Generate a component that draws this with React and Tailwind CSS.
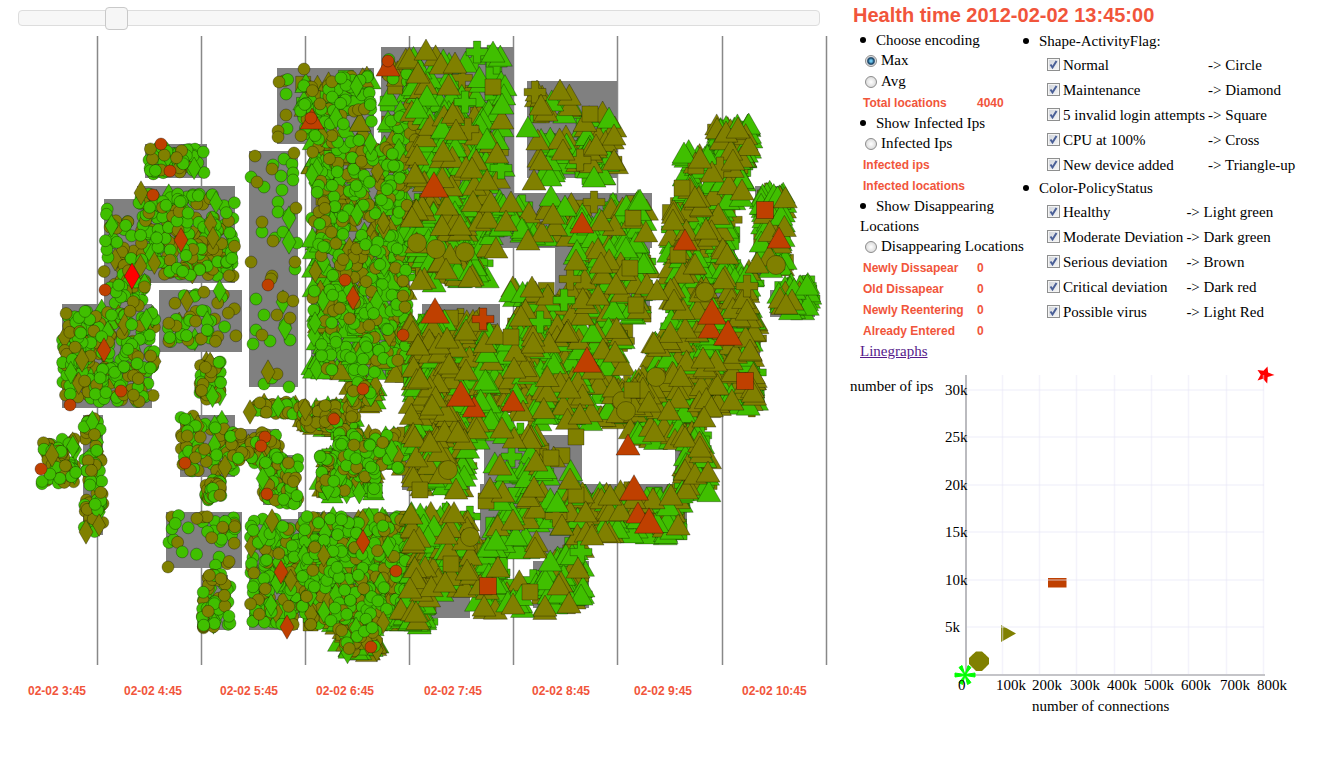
import React from "react";

const GREEN = "#40bf00";
const OLIVE = "#808000";
const RUST = "#bf4000";
const RED = "#ff0000";

function createRandom(seed) {
  let s = seed;
  return () => {
    s = (s + 0x6d2b79f5) | 0;
    let t = Math.imul(s ^ (s >>> 15), 1 | s);
    t = (t + Math.imul(t ^ (t >>> 7), 61 | t)) ^ t;
    return ((t ^ (t >>> 14)) >>> 0) / 4294967296;
  };
}

// Office blocks: [left, top, right, bottom]
const BLOCKS = [
  [145, 144, 207, 178], [277, 68, 374, 144], [381, 47, 514, 193], [527, 81, 617, 178],
  [137, 186, 235, 283], [104, 199, 137, 304], [249, 151, 298, 387], [311, 144, 409, 378],
  [400, 193, 652, 248], [666, 207, 735, 300], [62, 304, 152, 408], [159, 290, 242, 352],
  [83, 415, 103, 535], [180, 415, 235, 477], [235, 429, 279, 460], [263, 455, 298, 505],
  [166, 512, 242, 568], [201, 575, 228, 630], [249, 519, 298, 630], [298, 512, 470, 618],
  [555, 248, 650, 318], [422, 304, 500, 430], [690, 330, 760, 410], [755, 186, 784, 275],
  [770, 290, 815, 317], [402, 429, 470, 490], [484, 435, 582, 553], [582, 484, 687, 540],
  [480, 484, 540, 553], [533, 561, 589, 608], [405, 512, 475, 590], [675, 440, 708, 490],
];

// Site groups: [left, top, right, bottom, count, mix, share of healthy]
// c = circles and diamonds, m = circles over triangles, t = triangles, squares and crosses
const GROUPS = [
  [149, 147, 206, 174, 62, "c", 0.65], [103, 204, 137, 291, 42, "c", 0.65],
  [138, 192, 235, 277, 215, "c", 0.6], [108, 280, 145, 306, 24, "c", 0.6],
  [62, 310, 155, 402, 240, "c", 0.6], [160, 289, 238, 345, 48, "c", 0.65],
  [84, 418, 103, 532, 80, "c", 0.6], [42, 438, 76, 484, 75, "c", 0.6],
  [200, 358, 221, 400, 62, "c", 0.5], [180, 416, 235, 471, 70, "c", 0.55],
  [230, 432, 279, 464, 80, "c", 0.45], [262, 458, 298, 504, 62, "c", 0.6],
  [205, 480, 222, 500, 36, "c", 0.5], [252, 402, 300, 414, 55, "c", 0.25],
  [168, 513, 240, 566, 36, "c", 0.7], [202, 574, 231, 628, 62, "c", 0.6],
  [250, 518, 302, 625, 145, "c", 0.7], [300, 405, 355, 430, 100, "m", 0.3],
  [349, 382, 377, 404, 50, "m", 0.3], [302, 516, 410, 625, 500, "m", 0.65],
  [338, 626, 378, 653, 85, "m", 0.45], [320, 455, 376, 494, 110, "m", 0.65],
  [338, 432, 405, 470, 105, "m", 0.55], [311, 145, 408, 374, 540, "m", 0.62],
  [303, 75, 372, 144, 115, "m", 0.7], [282, 75, 305, 140, 8, "c", 0.5],
  [386, 58, 420, 190, 90, "m", 0.65], [405, 55, 506, 115, 50, "t", 0.75],
  [415, 110, 507, 190, 105, "t", 0.7], [536, 90, 575, 115, 18, "t", 0.6],
  [580, 108, 617, 165, 26, "t", 0.75], [536, 135, 612, 175, 42, "t", 0.6],
  [415, 193, 488, 282, 140, "t", 0.6], [490, 200, 648, 238, 95, "t", 0.68],
  [565, 240, 650, 318, 130, "t", 0.65], [510, 285, 560, 325, 50, "t", 0.6],
  [410, 318, 480, 440, 210, "t", 0.4], [480, 328, 625, 422, 300, "t", 0.48],
  [650, 325, 700, 420, 125, "t", 0.55], [625, 375, 650, 420, 35, "t", 0.5],
  [700, 330, 757, 408, 120, "t", 0.45], [668, 205, 732, 335, 220, "t", 0.6],
  [732, 270, 757, 332, 45, "t", 0.5], [761, 190, 786, 268, 85, "t", 0.7],
  [777, 283, 810, 310, 45, "t", 0.7], [715, 123, 751, 158, 70, "t", 0.65],
  [682, 150, 745, 200, 85, "t", 0.68], [412, 430, 468, 488, 100, "t", 0.48],
  [490, 445, 540, 550, 58, "t", 0.72], [540, 455, 572, 540, 22, "t", 0.65],
  [572, 490, 682, 535, 155, "t", 0.6], [630, 425, 705, 442, 40, "t", 0.55],
  [682, 440, 710, 492, 40, "t", 0.6], [410, 512, 472, 592, 140, "t", 0.55],
  [400, 595, 430, 624, 42, "t", 0.75], [477, 545, 500, 592, 28, "t", 0.6],
  [476, 580, 585, 610, 52, "t", 0.68], [545, 545, 584, 600, 42, "t", 0.75],
  [486, 432, 540, 440, 10, "t", 0.65],
];

// Individually located sites: [shape, colour, x, y, size]
const list = (shape, color, size, points) => points.map(([x, y]) => [shape, color, x, y, size]);

const SITES = [
  ...list("circle", GREEN, 12, [[284,159],[292,164],[293,173],[273,165],[281,176],[293,180],[251,177],[264,187],[282,190],[278,202],[278,212],[289,215],[262,232],[275,238],[283,232],[297,243],[295,269],[256,299],[264,315],[285,325],[256,330],[253,344],[270,341],[290,340],[264,384],[289,387],[272,378]]),
  ...list("diamond", GREEN, 14, [[289,242],[289,218],[283,302],[285,328]]),
  ...list("circle", OLIVE, 12, [[255,156],[294,153],[272,169],[257,182],[296,208],[262,222],[273,241],[251,262],[295,262],[272,276],[271,279],[283,297],[293,301],[277,315],[290,318],[262,335],[277,374],[168,567],[304,69],[279,82],[278,131],[286,115],[278,137],[403,281],[403,296],[405,307]]),
  ...list("diamond", OLIVE, 14, [[268,372],[141,193],[82,360],[250,412],[225,467],[86,532],[52,455],[272,521]]),
  ...list("circle", OLIVE, 19, [[417,243],[436,249],[465,252],[705,292],[776,265],[656,377],[622,401],[626,411],[470,537],[448,470]]),
  ...list("square", OLIVE, 16, [[493,87],[590,114],[630,268],[636,305],[682,188],[678,255],[633,218],[551,458],[576,437],[576,495],[420,490],[451,564],[530,592],[486,501],[511,337],[632,390],[696,166]]),
  ...list("cross", OLIVE, 22, [[535,92],[594,202],[720,168],[570,279],[747,286],[556,516],[580,160],[468,129]]),
  ...list("cross", GREEN, 22, [[477,52],[465,102],[564,300],[540,322],[581,552],[501,168]]),
  ...list("triangle", GREEN, 24, [[493,52],[528,127],[594,177],[496,540],[557,502],[581,595],[807,285],[640,200],[684,153],[427,96],[417,108],[551,196],[565,206],[609,118],[502,104],[550,176],[487,139]]),
  ...list("triangle", OLIVE, 24, [[426,50],[441,64],[455,63],[418,73],[456,130],[417,155],[415,173],[472,168],[497,153],[487,180],[560,90],[541,105],[541,160],[563,150],[596,145],[614,135],[614,160],[534,180],[726,132],[738,128],[712,172],[695,197],[700,158],[742,190],[733,160],[412,217],[460,225],[446,269],[470,277],[511,202],[506,221],[496,248],[542,232],[553,214],[528,240],[576,260],[601,263],[532,287],[616,284],[598,295],[521,316],[695,264],[727,254],[673,220],[706,229],[757,263],[747,310],[674,300],[657,290],[568,330],[533,336],[447,338],[466,330],[533,343],[567,332],[615,352],[654,343],[703,358],[750,350],[732,400],[753,392],[420,378],[466,370],[514,368],[569,388],[432,405],[649,402],[580,414],[669,410],[704,417],[415,437],[430,442],[458,432],[502,428],[685,437],[700,447],[500,465],[536,461],[570,479],[503,492],[490,488],[534,487],[456,489],[513,520],[562,525],[535,548],[498,567],[467,570],[578,568],[484,606],[513,604],[545,606],[569,603],[446,534],[414,540],[416,612],[411,514],[610,495],[671,495],[592,535],[685,470],[695,474],[708,472],[780,298],[792,300],[786,304],[410,588],[445,582]]),
  ...list("diamond", RUST, 14, [[181,240],[353,298],[104,350],[363,542],[281,572],[287,627]]),
  ...list("diamond", RED, 15, [[132,276]]),
  ...list("triangle", RUST, 24, [[582,223],[685,240],[779,238],[710,328],[474,407],[513,401],[628,445],[638,513],[312,119],[388,66]]),
  ...list("triangle", RUST, 29, [[434,185],[435,311],[712,312],[728,333],[587,360],[461,394],[634,488],[649,521]]),
  ...list("square", RUST, 17, [[765,210],[745,381],[488,586]]),
  ...list("cross", RUST, 22, [[483,319]]),
  ...list("circle", RUST, 12, [[161,144],[170,171],[153,195],[268,285],[105,290],[121,391],[70,405],[345,280],[403,335],[363,389],[334,419],[41,469],[185,463],[265,437],[261,446],[267,494],[396,571],[371,647],[388,61],[311,118]]),
];

function outline(shape, x, y, s) {
  const n = (v) => Math.round(v * 10) / 10;
  const h = s / 2;
  if (shape === "triangle") return `M${n(x)},${n(y - s * 0.46)}l${h},${n(s * 0.88)}h${-s}Z`;
  if (shape === "diamond") return `M${n(x)},${n(y - s * 0.87)}l${h},${n(s * 0.87)}l${-h},${n(s * 0.87)}l${-h},${n(-s * 0.87)}Z`;
  if (shape === "square") return `M${n(x - h)},${n(y - h)}h${s}v${s}h${-s}Z`;
  if (shape === "cross") {
    const a = n(s / 3);
    return `M${n(x - a / 2)},${n(y - a * 1.5)}h${a}v${a}h${a}v${a}h${-a}v${a}h${-a}v${-a}h${-a}v${-a}h${a}Z`;
  }
  return `M${n(x - h)},${n(y)}a${h},${h} 0 1,0 ${s},0a${h},${h} 0 1,0 ${-s},0Z`;
}

function scatter() {
  const random = createRandom(2012);
  const layers = [[], [], []];
  GROUPS.forEach(([x1, y1, x2, y2, count, mix, healthy]) => {
    for (let i = 0; i < count; i += 1) {
      const x = x1 + random() * (x2 - x1);
      const y = y1 + random() * (y2 - y1);
      const color = random() < healthy ? GREEN : OLIVE;
      const pick = random();
      let shape = "circle";
      let size = 12;
      let layer = 1;
      if (mix === "c") {
        if (pick < 0.1) { shape = "diamond"; size = 13; }
      } else if (mix === "m") {
        if (pick < 0.36) { shape = "triangle"; size = 22; layer = 0; }
        else if (pick < 0.43) { shape = "square"; size = 15; layer = 0; }
        else if (pick < 0.49) { shape = "diamond"; size = 13; }
      } else {
        shape = "triangle";
        size = 24;
        if (pick < 0.13) { shape = "square"; size = 16; layer = 0; }
        else if (pick < 0.26) { shape = "cross"; size = 21; layer = 0; }
        if (color === OLIVE && pick > 0.75) layer = 2;
      }
      layers[layer].push([shape, color, x, y, size]);
    }
  });
  return layers.flat();
}

const MARKS = [...scatter(), ...SITES];

function SiteMap() {
  return (
    <svg viewBox="0 36 840 629" className="block w-full" role="img" aria-label="Health by location">
      {[97, 201, 305, 409, 513, 617, 722, 826].map((x) => (
        <line key={x} x1={x + 0.5} x2={x + 0.5} y1="36" y2="665" stroke="#888888" strokeWidth="1.5" />
      ))}
      {BLOCKS.map(([x1, y1, x2, y2], i) => (
        <rect key={i} x={x1} y={y1} width={x2 - x1} height={y2 - y1} fill="#808080" />
      ))}
      {MARKS.map(([shape, color, x, y, size], i) => (
        <path key={i} d={outline(shape, x, y, size)} fill={color} stroke="#000" strokeOpacity="0.3" />
      ))}
    </svg>
  );
}

const X_TICKS = [[958, "0"], [996, "100k"], [1032, "200k"], [1070, "300k"], [1107, "400k"], [1144, "500k"], [1181, "600k"], [1220, "700k"], [1257, "800k"]];
const Y_TICKS = [[395, "30k"], [442, "25k"], [490, "20k"], [537, "15k"], [585, "10k"], [632, "5k"]];

function ConnectionsChart() {
  return (
    <svg viewBox="840 361 480 359" className="block w-full text-[15px]" role="img" aria-label="Number of ips by number of connections">
      <line x1="966" x2="966" y1="375" y2="675" stroke="#bbbbbf" strokeWidth="2" />
      <line x1="965" x2="1265" y1="675" y2="675" stroke="#c4c4c8" strokeWidth="2" />
      <circle cx="979" cy="661" r="9" fill={OLIVE} />
      <path d="M976 651.500h6l7 6.500v6l-7 7h-6l-7-7v-6Z" fill={OLIVE} />
      <path d="M1001 625v17l15-8.500Z" fill={OLIVE} />
      <rect x="1048" y="578" width="18.500" height="9.500" fill={RUST} />
      <path d="M1274.500 375l-6.800 2 -.5 6.500 -4.200-4.800 -5.500 1.800 3.200-5.700 -3.200-4.800 6 .8 4-4.300 .6 6Z" fill={RED} />
      <g stroke="#e9e7f8" strokeOpacity="0.5" strokeWidth="1.500">
        {[1002, 1039, 1076, 1114, 1151, 1188, 1226, 1263].map((x) => (
          <line key={x} x1={x + 0.5} x2={x + 0.5} y1="375" y2="674" />
        ))}
        {[390, 437, 485, 532, 580, 627].map((y) => (
          <line key={y} x1="967" x2="1264" y1={y} y2={y} />
        ))}
      </g>
      <path
        d="M955 673l10 1.500 10-1.500v4l-10-1.500-10 1.500ZM959 667.500l3-2 3 9.500 6 7.500-3.500 2-2.500-9.500ZM971 667.500l-3-2-3 9.500-6 7.500 3.500 2 2.500-9.500Z"
        fill="#00ff00"
        stroke="#00ff00"
      />
      {Y_TICKS.map(([y, label]) => <text key={label} x="945" y={y}>{label}</text>)}
      {X_TICKS.map(([x, label]) => <text key={label} x={x} y="690">{label}</text>)}
      <text x="850" y="391">number of ips</text>
      <text x="1032" y="711">number of connections</text>
    </svg>
  );
}

function Bullet() {
  return <span aria-hidden="true" className="mr-2.5 inline-block size-1.5 -translate-y-0.5 rounded-full bg-black align-middle" />;
}

function Radio({ name, children, checked }) {
  return (
    <label className="flex h-[21px] items-center gap-1 pl-[5px] whitespace-nowrap">
      <input
        type="radio"
        name={name}
        defaultChecked={checked}
        className="size-3 shrink-0 appearance-none rounded-full border border-[#8c8c8c] bg-radial from-[#ffffff] to-[#cfcfcf] checked:from-[#6fc8f0] checked:from-15% checked:via-[#103a5c] checked:via-45% checked:to-[#e8e8e8] checked:to-65%"
      />
      {children}
    </label>
  );
}

function Stats({ rows }) {
  return (
    <table className="border-collapse font-['Liberation_Sans',Arial,sans-serif] text-[12px] font-bold text-[#f1553b]">
      <tbody>
        {rows.map(([label, value]) => (
          <tr key={label} className="h-[21px]">
            <th scope="row" className="w-[117px] p-0 pl-[3px] text-left leading-4 whitespace-nowrap">{label}</th>
            <td className="p-0 leading-4">{value}</td>
          </tr>
        ))}
      </tbody>
    </table>
  );
}

function Legend({ rows }) {
  return (
    <table className="ml-6 border-collapse">
      <tbody>
        {rows.map(([label, meaning]) => (
          <tr key={label} className="h-[25px]">
            <td className="p-0 pr-[3px]">
              <label className="flex items-center gap-[3px] leading-5 whitespace-nowrap">
                <span className="relative flex size-[13px]">
                  <input type="checkbox" defaultChecked className="peer size-[13px] appearance-none border border-[#8e8f8f] bg-linear-to-br from-[#cfd3da] to-[#f6f6f6] shadow-[inset_0_0_0_1px_#f4f4f4]" />
                  <svg viewBox="0 0 13 13" className="pointer-events-none absolute inset-0 hidden peer-checked:block">
                    <path d="M3.500 6.500L5.500 9.500L9.500 3" fill="none" stroke="#4a5f97" strokeWidth="2" />
                  </svg>
                </span>
                {label}
              </label>
            </td>
            <td className="p-0 leading-5 whitespace-nowrap">{meaning}</td>
          </tr>
        ))}
      </tbody>
    </table>
  );
}

export default function App() {
  return (
    <main className="grid min-h-screen grid-cols-[840fr_480fr] content-start bg-white font-['Liberation_Serif','Times_New_Roman',serif] text-[15px] text-black">
      <section className="min-w-0">
        <div className="flex h-9 pt-2.5 pr-5 pl-[18px]">
          <input
            type="range"
            min="0"
            max="1000"
            defaultValue="111"
            aria-label="Time"
            className="h-4 w-full appearance-none rounded-[4px] border border-[#dddddd] bg-[#f7f7f7] [&::-webkit-slider-thumb]:size-[23px] [&::-webkit-slider-thumb]:appearance-none [&::-webkit-slider-thumb]:rounded-[4px] [&::-webkit-slider-thumb]:border [&::-webkit-slider-thumb]:border-[#c9c9c9] [&::-webkit-slider-thumb]:bg-[#f6f6f6]"
          />
        </div>
        <SiteMap />
        <div className="mt-4 grid grid-cols-[96fr_96fr_96fr_108fr_108fr_102fr_108fr_98fr] pl-7 font-['Liberation_Sans',Arial,sans-serif] text-[12px] leading-5 font-bold whitespace-nowrap text-[#f1553b]">
          {["3:45", "4:45", "5:45", "6:45", "7:45", "8:45", "9:45", "10:45"].map((time) => (
            <span key={time}>{`02-02 ${time}`}</span>
          ))}
        </div>
      </section>

      <section className="min-w-0">
        <h1 className="pl-[13px] font-['Liberation_Sans',Arial,sans-serif] text-[20px] leading-[30px] font-bold whitespace-nowrap text-[#f1553b]">
          Health time 2012-02-02 13:45:00
        </h1>
        <div className="flex pl-5">
          <div className="w-[163px] shrink-0">
            <h2 className="leading-5"><Bullet />Choose encoding</h2>
            <Radio name="encoding" checked>Max</Radio>
            <Radio name="encoding">Avg</Radio>
            <Stats rows={[["Total locations", "4040"]]} />
            <h2 className="leading-5"><Bullet />Show Infected Ips</h2>
            <Radio name="infected">Infected Ips</Radio>
            <Stats rows={[["Infected ips", ""], ["Infected locations", ""]]} />
            <h2 className="leading-5"><Bullet />Show Disappearing Locations</h2>
            <Radio name="disappearing">Disappearing Locations</Radio>
            <Stats rows={[["Newly Dissapear", "0"], ["Old Dissapear", "0"], ["Newly Reentering", "0"], ["Already Entered", "0"]]} />
            <a href="#linegraphs" className="block leading-5 text-[#551a8b] underline">Linegraphs</a>
          </div>
          <div className="pt-px">
            <h2 className="leading-[21px]"><Bullet />Shape-ActivityFlag:</h2>
            <Legend
              rows={[
                ["Normal", "-> Circle"],
                ["Maintenance", "-> Diamond"],
                ["5 invalid login attempts", "-> Square"],
                ["CPU at 100%", "-> Cross"],
                ["New device added", "-> Triangle-up"],
              ]}
            />
            <h2 className="leading-[22px]"><Bullet />Color-PolicyStatus</h2>
            <Legend
              rows={[
                ["Healthy", "-> Light green"],
                ["Moderate Deviation", "-> Dark green"],
                ["Serious deviation", "-> Brown"],
                ["Critical deviation", "-> Dark red"],
                ["Possible virus", "-> Light Red"],
              ]}
            />
          </div>
        </div>
        <ConnectionsChart />
      </section>
    </main>
  );
}
